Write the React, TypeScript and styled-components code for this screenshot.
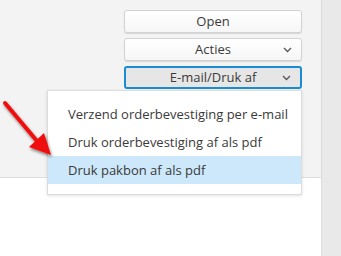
import React from 'react';
import styled, { createGlobalStyle } from 'styled-components';

const text = '#3a3a3a';

const GlobalStyle = createGlobalStyle`
  html, body {
    margin: 0;
    padding: 0;
    width: 341px;
    height: 256px;
    overflow: hidden;
    font-family: 'Open Sans', 'Liberation Sans', sans-serif;
  }
`;

const Chevron = () => (
  <svg width="9" height="6" viewBox="0 0 9 6">
    <path d="M1 1 L4.5 4.5 L8 1" fill="none" stroke="#555" strokeWidth="1.3" />
  </svg>
);

const items = [
  'Verzend orderbevestiging per e-mail',
  'Druk orderbevestiging af als pdf',
  'Druk pakbon af als pdf',
];

export default function App() {
  return (
    <>
      <GlobalStyle />
      <Page>
        <Main>
          <TopPanel>
            <ButtonColumn>
              <Button>
                <Label>Open</Label>
              </Button>
              <Button>
                <Label>Acties</Label>
                <Caret>
                  <Chevron />
                </Caret>
              </Button>
              <MenuWrap>
                <Button $active>
                  <Label>E-mail/Druk af</Label>
                  <Caret>
                    <Chevron />
                  </Caret>
                </Button>
                <Menu>
                  {items.map((item, i) => (
                    <MenuItem key={item} $selected={i === 2}>
                      {item}
                    </MenuItem>
                  ))}
                </Menu>
              </MenuWrap>
            </ButtonColumn>
          </TopPanel>
          <Arrow width="60" height="70" viewBox="0 0 60 70">
            <defs>
              <filter id="sh" x="-30%" y="-30%" width="160%" height="160%">
                <feGaussianBlur in="SourceAlpha" stdDeviation="1.5" />
                <feOffset dx="1" dy="2" result="b" />
                <feComponentTransfer>
                  <feFuncA type="linear" slope="0.5" />
                </feComponentTransfer>
                <feMerge>
                  <feMergeNode />
                  <feMergeNode in="SourceGraphic" />
                </feMerge>
              </filter>
            </defs>
            <g filter="url(#sh)">
              <line x1="5" y1="5" x2="37" y2="43" stroke="#f01010" strokeWidth="4" strokeLinecap="round" />
              <polygon points="51,57 29,49 44,35" fill="#f01010" />
            </g>
          </Arrow>
        </Main>
        <Sidebar />
      </Page>
    </>
  );
}

const Page = styled.div`
  display: flex;
  width: 341px;
  height: 256px;
  background: #fff;
`;

const Main = styled.div`
  position: relative;
  flex: 1;
`;

const TopPanel = styled.div`
  height: 178px;
  box-sizing: border-box;
  background: #f3f3f3;
  border-bottom: 1px solid #dedede;
  display: flex;
  justify-content: flex-end;
  padding: 10px 19px 0 0;
`;

const Sidebar = styled.div`
  width: 19px;
  background: #e9e9e9;
  border-left: 1px solid #dcdcdc;
`;

const ButtonColumn = styled.div`
  display: flex;
  flex-direction: column;
  gap: 5px;
  width: 178px;
`;

const Button = styled.button<{ $active?: boolean }>`
  position: relative;
  height: 23px;
  width: 100%;
  box-sizing: border-box;
  display: flex;
  align-items: center;
  justify-content: center;
  padding: 0 10px;
  border-radius: 3px;
  font-family: 'Open Sans', 'Liberation Sans', sans-serif;
  font-size: 13px;
  color: ${text};
  cursor: pointer;
  border: ${(p) => (p.$active ? '2px solid #1b8bd6' : '1px solid #d2d2d2')};
  background: ${(p) =>
    p.$active ? '#e6e6e6' : 'linear-gradient(#ffffff, #f6f6f6)'};
  box-shadow: ${(p) => (p.$active ? 'none' : '0 1px 1px rgba(0, 0, 0, 0.12)')};
`;

const Label = styled.span`
  line-height: 1;
`;

const Caret = styled.span`
  position: absolute;
  right: 9px;
  top: 50%;
  transform: translateY(-50%);
  display: flex;
`;

const MenuWrap = styled.div`
  position: relative;
`;

const Menu = styled.ul`
  position: absolute;
  top: 24px;
  right: 0;
  width: 255px;
  box-sizing: border-box;
  margin: 0;
  padding: 9px 0 10px;
  list-style: none;
  background: #fff;
  border: 1px solid #dcdcdc;
  box-shadow: 0 1px 3px rgba(0, 0, 0, 0.12);
  z-index: 2;
`;

const MenuItem = styled.li<{ $selected?: boolean }>`
  height: 28px;
  display: flex;
  align-items: center;
  padding-left: 20px;
  font-size: 13px;
  color: ${text};
  background: ${(p) => (p.$selected ? '#cce8fa' : 'transparent')};
  white-space: nowrap;
`;

const Arrow = styled.svg`
  position: absolute;
  left: 0;
  top: 98px;
  z-index: 3;
`;
